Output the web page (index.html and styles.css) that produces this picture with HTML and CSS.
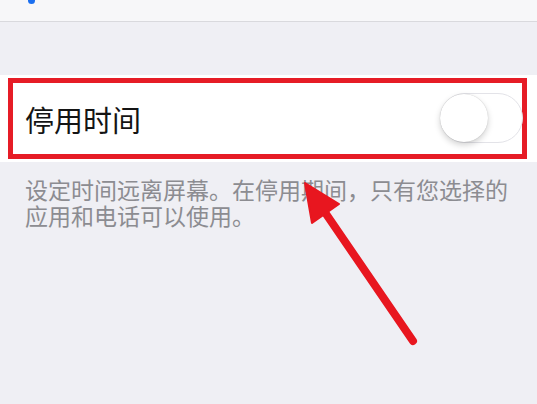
FILE: index.html
```html
<!DOCTYPE html>
<html lang="zh-CN">
<head>
  <meta charset="UTF-8">
  <meta name="viewport" content="width=device-width, initial-scale=1.0">
  <title>屏幕使用时间</title>
  <link rel="stylesheet" href="styles.css">
</head>
<body>
  <header class="nav-bar">
    <span class="back-mark"></span>
  </header>

  <section class="group">
    <div class="cell">
      <div class="cell-row">
        <span class="cell-title">停用时间</span>
        <span class="switch"><span class="knob"></span></span>
      </div>
    </div>
    <p class="footer-note">设定时间远离屏幕。在停用期间，只有您选择的应用和电话可以使用。</p>
  </section>

  <!-- pointer arrow drawn over the page -->
  <svg class="pointer" width="537" height="404" viewBox="0 0 537 404">
    <line x1="413" y1="341" x2="322" y2="208" stroke="#e8161f" stroke-width="8" stroke-linecap="round"/>
    <polygon points="305,183 339,204 312,223" fill="#e8161f" stroke="#e8161f" stroke-width="2" stroke-linejoin="round"/>
  </svg>
</body>
</html>
```

FILE: styles.css
```css
body {
  margin: 0;
  padding: 0;
  background: #efeff4;
  font-family: "Noto Sans CJK SC", "Noto Sans", sans-serif;
  position: relative;
  width: 537px;
  height: 404px;
  overflow: hidden;
}
.nav-bar {
  height: 21px;
  background: #f7f7f9;
  border-bottom: 1px solid #d9d9dd;
  display: flex;
  align-items: flex-start;
}
.back-mark {
  display: block;
  width: 7px;
  height: 4px;
  margin-left: 28px;
  background: #1b6ff0;
  border-radius: 0 0 4px 4px;
  filter: blur(0.6px);
}
.group {
  padding-top: 53px;
}
.cell {
  background: #fff;
  padding: 3px 10px 3px 8px;
}
.cell-row {
  height: 69px;
  border: 5px solid #e61c26;
  display: flex;
  align-items: center;
  justify-content: space-between;
  padding-left: 12px;
  padding-top: 2px;
}
.cell-title {
  font-size: 29px;
  color: #141414;
  line-height: 1;
}
.switch {
  position: relative;
  width: 81px;
  height: 48px;
  border: 1px solid #e3e3e8;
  border-radius: 25px;
  background: #fff;
  margin-right: -1px;
  margin-top: -3px;
  box-sizing: content-box;
}
.knob {
  position: absolute;
  left: -1px;
  top: 0;
  width: 48px;
  height: 48px;
  border-radius: 50%;
  background: #fff;
  box-shadow: 0 3px 6px rgba(0, 0, 0, 0.18), 0 0 1px rgba(0, 0, 0, 0.25);
}
.footer-note {
  margin: 0;
  padding: 14px 25px 0 25px;
  font-size: 23px;
  line-height: 26px;
  color: #8c8c91;
}
.pointer {
  position: absolute;
  left: 0;
  top: 0;
}
```
